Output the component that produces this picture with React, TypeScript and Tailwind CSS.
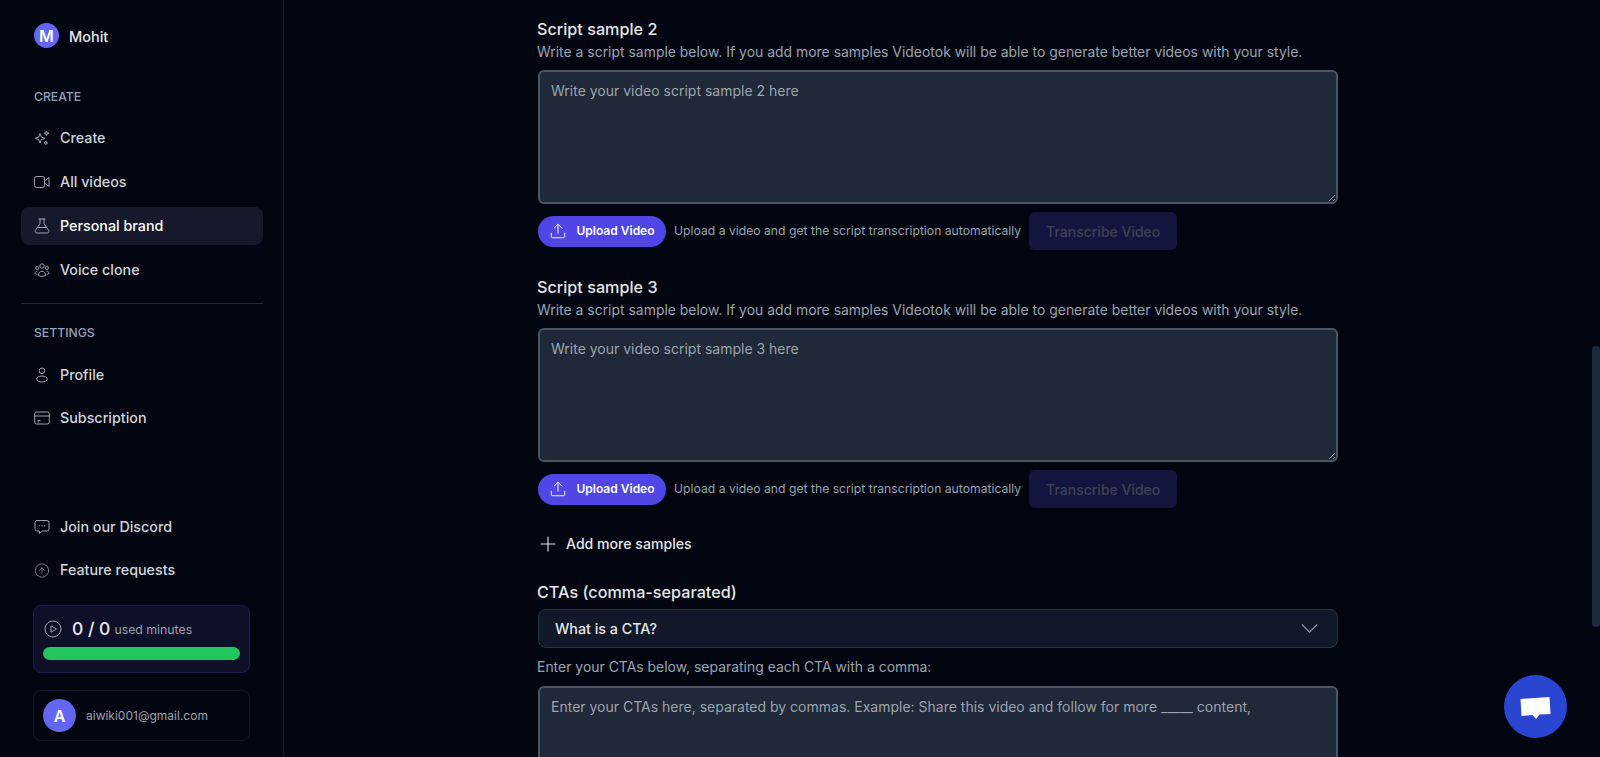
import { ChevronDown, CircleArrowUp, Plus, Upload } from 'lucide-react';
import type { ReactNode } from 'react';

const sans = { fontFamily: 'Inter, "Noto Sans", sans-serif' };

function SparkIcon() {
  return (
    <svg width="16" height="16" viewBox="0 0 16 16" fill="none" stroke="currentColor" strokeWidth="1" strokeLinejoin="round">
      <path d="M6 3.500 7.300 7 10.800 8.300 7.300 9.600 6 13 4.700 9.600 1.200 8.300 4.700 7Z" />
      <path d="M12.500 0.800 13.100 2.600 14.900 3.200 13.100 3.800 12.500 5.600 11.900 3.800 10.100 3.200 11.900 2.600Z" />
      <path d="M11.800 11 12.300 12.400 13.700 12.900 12.300 13.400 11.800 14.800 11.300 13.400 9.900 12.900 11.300 12.400Z" />
    </svg>
  );
}

function VideoIcon() {
  return (
    <svg width="16" height="16" viewBox="0 0 16 16" fill="none" stroke="currentColor" strokeWidth="1" strokeLinejoin="round">
      <rect x="0.500" y="2.500" width="10" height="11" rx="2" />
      <path d="M10.500 7 15 3.500V12.500L10.500 9Z" />
    </svg>
  );
}

function FlaskIcon() {
  return (
    <svg width="16" height="16" viewBox="0 0 16 16" fill="none" stroke="currentColor" strokeWidth="1" strokeLinecap="round" strokeLinejoin="round">
      <path d="M5 1h6M6 1v4.500L1.300 12.500C.7 13.600 1.300 15 2.700 15h10.600c1.400 0 2-1.400 1.400-2.500L10 5.500V1" />
      <path d="M3.500 9.500h9" />
    </svg>
  );
}

function GroupIcon() {
  return (
    <svg width="16" height="16" viewBox="0 0 16 16" fill="none" stroke="currentColor" strokeWidth="1">
      <circle cx="8" cy="4" r="2.200" />
      <circle cx="3.200" cy="6" r="1.600" />
      <circle cx="12.800" cy="6" r="1.600" />
      <path d="M4.500 13.500c0-2.600 1.500-4.300 3.500-4.300s3.500 1.700 3.500 4.300c-2 1.200-5 1.200-7 0Z" />
      <path d="M3.500 9.200C2 9.200 1 10.200 1 11.500c.6.500 1.500.8 2.400.8M12.500 9.200c1.500 0 2.500 1 2.500 2.300-.6.500-1.500.8-2.400.8" />
    </svg>
  );
}

function PersonIcon() {
  return (
    <svg width="16" height="16" viewBox="0 0 16 16" fill="none" stroke="currentColor" strokeWidth="1">
      <circle cx="8" cy="3.800" r="2.800" />
      <ellipse cx="8" cy="12" rx="5.300" ry="3" />
    </svg>
  );
}

function CardIcon() {
  return (
    <svg width="16" height="16" viewBox="0 0 16 16" fill="none" stroke="currentColor" strokeWidth="1">
      <rect x="0.700" y="2" width="14.600" height="12" rx="2" />
      <path d="M0.700 6h14.600M3.500 10.500h3M3.500 12h1.500" />
    </svg>
  );
}

function ChatIcon() {
  return (
    <svg width="16" height="16" viewBox="0 0 16 16" fill="none" stroke="currentColor" strokeWidth="1" strokeLinejoin="round">
      <path d="M3 1.500h10a2 2 0 0 1 2 2v6.500a2 2 0 0 1-2 2H8.500L5.500 14.500V12H3a2 2 0 0 1-2-2V3.500a2 2 0 0 1 2-2Z" />
      <path d="M5 6.800h.5M7.800 6.800h.5M10.500 6.800h.5" strokeLinecap="round" />
    </svg>
  );
}

function PlayCircle() {
  return (
    <svg width="18" height="18" viewBox="0 0 18 18" fill="none" stroke="currentColor" strokeWidth="1">
      <circle cx="9" cy="9" r="8" />
      <path d="M7 5.800 12.500 9 7 12.200Z" strokeLinejoin="round" />
    </svg>
  );
}

function NavItem({ icon, label, active }: { icon: ReactNode; label: string; active?: boolean }) {
  return (
    <div className={`flex h-[38px] items-center gap-[10px] rounded-lg px-[13px] text-[14.300px] font-medium ${active ? 'bg-[#151929] text-white' : 'text-[#d1d5db]'}`}>
      <span className="flex w-4 justify-center text-[#9ca3af]">{icon}</span>
      {label}
    </div>
  );
}

function Sample({ n }: { n: number }) {
  return (
    <div>
      <h3 className="-ml-px text-[16.200px] leading-[24px] font-medium text-[#e5e7eb]">Script sample {n}</h3>
      <p className="mt-[1px] -ml-px text-[13.950px] leading-[20px] text-[#9ca3af]">
        Write a script sample below. If you add more samples Videotok will be able to generate better videos with your style.
      </p>
      <textarea
        readOnly
        placeholder={`Write your video script sample ${n} here`}
        className="mt-[8px] block h-[134px] w-full rounded-md border-2 border-[#4b5563] bg-[#1f2937] px-[11px] py-[9px] text-[14px] leading-[20px] outline-none placeholder:text-[#9ca3af]"
      />
      <div className="mt-[8px] flex items-center gap-2">
        <div className="flex h-[31px] w-[128px] items-center justify-center gap-[9px] rounded-full bg-[#4f46e5] text-[12px] font-semibold text-white">
          <Upload size={18} strokeWidth={1.250} />
          Upload Video
        </div>
        <span className="text-[12.200px] text-[#9ca3af]">Upload a video and get the script transcription automatically</span>
        <div className="flex h-[38px] w-[148px] items-center justify-center rounded-md bg-[#14153f] text-[14px] font-medium text-[#3f4254]">
          Transcribe Video
        </div>
      </div>
    </div>
  );
}

export default function App() {
  return (
    <div style={sans} className="relative flex h-screen overflow-hidden bg-[#020611]">
      {/* Sidebar */}
      <aside className="flex w-[284px] shrink-0 flex-col border-r border-[#1a1f2e] pt-[23px] pr-[20px] pl-[21px]">
        <div className="flex items-center gap-[10px] pl-[13px]">
          <div className="flex h-[25px] w-[25px] items-center justify-center rounded-full bg-[#6366f1] text-[16px] font-semibold text-white">M</div>
          <span className="mt-[2px] text-[14.500px] font-medium text-[#e5e7eb]">Mohit</span>
        </div>
        <p className="mt-[40px] pl-[13px] text-[12.200px] leading-[18px] font-medium text-[#94a3b8]">CREATE</p>
        <div className="mt-[13px] flex flex-col gap-[6px]">
          <NavItem icon={<SparkIcon />} label="Create" />
          <NavItem icon={<VideoIcon />} label="All videos" />
          <NavItem icon={<FlaskIcon />} label="Personal brand" active />
          <NavItem icon={<GroupIcon />} label="Voice clone" />
        </div>
        <div className="mt-[14px] h-px bg-[#1f2937]" />
        <p className="mt-[20px] pl-[13px] text-[12.200px] leading-[18px] font-medium text-[#94a3b8]">SETTINGS</p>
        <div className="mt-[14px] flex flex-col gap-[5px]">
          <NavItem icon={<PersonIcon />} label="Profile" />
          <NavItem icon={<CardIcon />} label="Subscription" />
        </div>
        <div className="mt-auto flex flex-col gap-[5px]">
          <NavItem icon={<ChatIcon />} label="Join our Discord" />
          <NavItem icon={<CircleArrowUp size={17} strokeWidth={1.100} />} label="Feature requests" />
        </div>
        <div className="mt-4 mr-[13px] ml-3 h-[68px] rounded-lg border border-[#1e1b4b] bg-[#0d1026] px-[9px] pt-[11px]">
          <div className="flex items-center gap-[10px] pl-[1px] text-[#9ca3af]">
            <PlayCircle />
            <span className="text-[17.500px] leading-[24px] font-medium text-[#e5e7eb]">0 / 0</span>
            <span className="-ml-[6px] mt-[3px] text-[12.300px] text-[#9ca3af]">used minutes</span>
          </div>
          <div className="mt-[6px] h-[13px] rounded-full bg-[#22c55e]" />
        </div>
        <div className="mt-[17px] mr-[13px] mb-4 ml-3 flex h-[51px] items-center gap-[10px] rounded-lg border border-[#111527] px-[9px]">
          <div className="flex h-[33px] w-[33px] items-center justify-center rounded-full bg-[#6366f1] text-[16px] font-semibold text-white">A</div>
          <span className="text-[12px] text-[#9ca3af]">aiwiki001@gmail.com</span>
        </div>
      </aside>

      {/* Main */}
      <main className="min-w-0 flex-1 pt-[17px] pl-[254px]">
        <div className="flex w-[800px] flex-col gap-[25px]">
          <Sample n={2} />
          <Sample n={3} />
        </div>
        <div className="mt-[22px] flex h-[28px] w-[800px] items-center gap-[6px] text-[14.100px] font-medium text-[#e5e7eb]">
          <Plus size={24} strokeWidth={1.100} className="-ml-[2px]" />
          Add more samples
        </div>
        <h3 className="mt-[22px] -ml-px w-[800px] text-[16.200px] leading-[24px] font-medium text-[#e5e7eb]">CTAs (comma-separated)</h3>
        <div className="mt-[5px] flex h-[39px] w-[800px] items-center justify-between rounded-lg border border-[#2b3340] bg-[#111827] pr-[13px] pl-[16px] text-[14.300px] font-medium text-[#e5e7eb]">
          What is a CTA?
          <ChevronDown size={29} strokeWidth={1} className="text-[#9ca3af]" />
        </div>
        <p className="mt-[9px] -ml-px w-[800px] text-[13.950px] leading-[20px] text-[#9ca3af]">Enter your CTAs below, separating each CTA with a comma:</p>
        <textarea
          readOnly
          placeholder="Enter your CTAs here, separated by commas. Example: Share this video and follow for more _____ content,"
          className="mt-[9px] block h-[134px] w-[800px] rounded-md border-2 border-[#4b5563] bg-[#1f2937] px-[11px] py-[9px] text-[14px] leading-[20px] outline-none placeholder:text-[#9ca3af]"
        />
      </main>

      {/* Scrollbar thumb */}
      <div className="absolute top-[346px] right-0 h-[281px] w-2 rounded-[4px] bg-[#1e293b]" />

      {/* Chat launcher */}
      <div className="absolute top-[675px] left-[1504px] flex h-[63px] w-[63px] items-center justify-center rounded-full bg-[#2a45d0]">
        <svg width="33" height="26" viewBox="0 0 32 26" fill="white">
          <path d="M1 5 30 3 31 20 20 20.500 16.500 25 13 21 2 22Z" />
        </svg>
      </div>
    </div>
  );
}
